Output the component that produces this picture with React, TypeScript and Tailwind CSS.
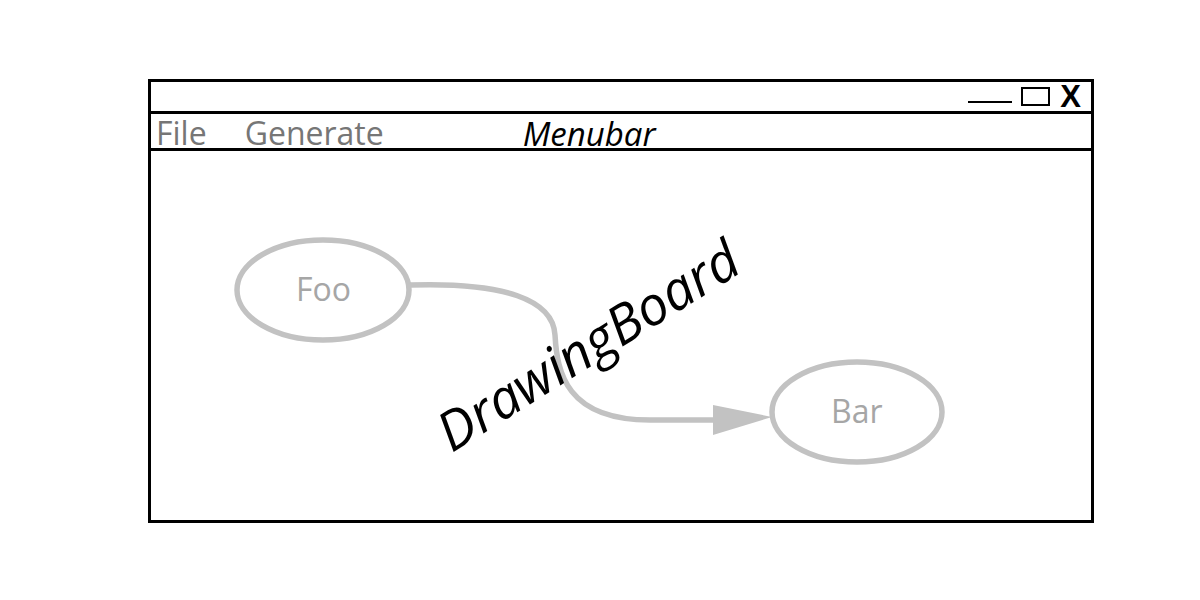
import React from 'react';

const font = { fontFamily: '"Open Sans", "Noto Sans", sans-serif' };

const WindowControls: React.FC = () => (
  <div className="flex h-[29px] items-center justify-end pr-[10px]">
    <div className="mt-[11px] h-[2px] w-[44px] bg-black" />
    <div className="ml-[9px] h-[19px] w-[29px] border-2 border-black" />
    <span className="ml-[10px] font-['Liberation_Sans',sans-serif] text-[31px] font-bold leading-none text-black">
      X
    </span>
  </div>
);

const MenuBar: React.FC = () => (
  <div
    className="flex h-[40px] items-center border-y-[3px] border-black pt-[4px] text-[32px] leading-none"
    style={font}
  >
    <span className="ml-[5px] text-[#767676]">File</span>
    <span className="ml-[38px] text-[#767676]">Generate</span>
    <span className="ml-[139px] text-[33px] italic text-black">Menubar</span>
  </div>
);

const DrawingBoard: React.FC = () => (
  <div className="relative flex-1 overflow-hidden" style={font}>
    {/* diagram: nodes and edge, drawn in page coordinates */}
    <svg className="absolute left-0 top-0" width="940" height="369" viewBox="151 151 940 369">
      <ellipse cx="323" cy="290" rx="86" ry="50" fill="none" stroke="#c2c2c2" strokeWidth="5.5" />
      <ellipse cx="857" cy="412" rx="85" ry="50" fill="none" stroke="#c2c2c2" strokeWidth="5.5" />
      <path
        d="M410 285 C 505 282, 553 300, 555 335 C 557 372, 566 420, 650 420 L 716 420"
        fill="none"
        stroke="#c2c2c2"
        strokeWidth="5.5"
      />
      <polygon points="713,405 713,435 772,417" fill="#c2c2c2" />
    </svg>
    <span className="absolute left-[145px] top-[122px] text-[32px] leading-none text-[#a6a6a6]">Foo</span>
    <span className="absolute left-[680px] top-[244px] text-[32px] leading-none text-[#a6a6a6]">Bar</span>
    <span className="absolute left-[436px] top-[193px] -translate-x-1/2 -translate-y-1/2 -rotate-[32deg] whitespace-nowrap text-[54px] italic leading-none text-black">
      DrawingBoard
    </span>
  </div>
);

export default function App() {
  return (
    <div className="h-[600px] w-[1200px] bg-white">
      <div className="ml-[148px] pt-[79px]">
        <div className="flex h-[444px] w-[946px] flex-col border-[3px] border-black bg-white">
          <WindowControls />
          <MenuBar />
          <DrawingBoard />
        </div>
      </div>
    </div>
  );
}
